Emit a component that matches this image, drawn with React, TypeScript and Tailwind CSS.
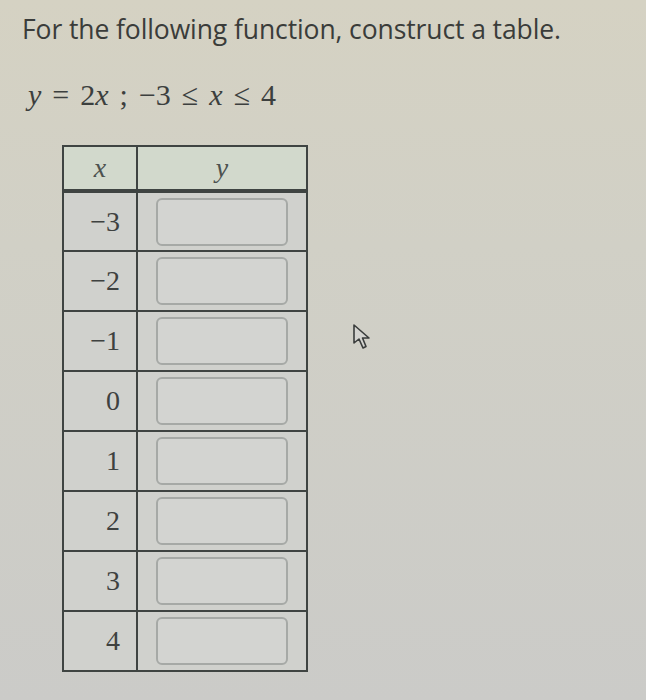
const rows = ["−3", "−2", "−1", "0", "1", "2", "3", "4"];

function Cursor() {
  return (
    <svg width="22" height="28" viewBox="0 0 22 28" className="ml-[44px] mt-[-14px]">
      <path
        d="M2 2 L2 20 L7 16 L11 25 L14 23.5 L10.5 15 L17 15 Z"
        fill="#d4d4d0"
        stroke="#3a3d3c"
        strokeWidth="1.6"
        strokeLinejoin="round"
      />
    </svg>
  );
}

export default function App() {
  return (
    <div className="h-[700px] w-[646px] overflow-hidden bg-[linear-gradient(180deg,#d5d2c3_0%,#d1d0c6_35%,#cbcbc8_100%)] font-['Open_Sans',sans-serif] text-[#3a3c3a]">
      <div className="pl-[22px] pt-[12px] text-[26.5px] leading-[34px] tracking-[-0.1px]">
        For the following function, construct a table.
      </div>
      <div className="mt-[34px] flex items-baseline gap-[11px] pl-[28px] font-['Liberation_Serif',serif] text-[30px] leading-[30px] text-[#3c3f3e]">
        <i>y</i>
        <span>=</span>
        <span>
          2<i>x</i>
        </span>
        <span>;</span>
        <span>−3</span>
        <span>≤</span>
        <i>x</i>
        <span>≤</span>
        <span>4</span>
      </div>

      <div className="mt-[35px] flex items-start">
        <table className="ml-[62px] w-[246px] border-collapse font-['Liberation_Serif',serif] text-[28px] text-[#3e4140]">
          <thead>
            <tr className="h-[40px] bg-[#d2d9cc]">
              <th className="w-[74px] border-2 border-b-[4px] border-[#3f4442] font-normal italic text-[#4d524f]">
                x
              </th>
              <th className="border-2 border-b-[4px] border-[#3f4442] font-normal italic text-[#4d524f]">
                y
              </th>
            </tr>
          </thead>
          <tbody>
            {rows.map((r) => (
              <tr key={r} className="h-[60px] bg-[#d0d1cd]">
                <td className="border-2 border-[#3f4442] pr-[16px] text-right">{r}</td>
                <td className="border-2 border-[#3f4442] px-[18px]">
                  <div className="h-[48px] rounded-[6px] border-2 border-[#a6a9a6] bg-[#d3d4d1]" />
                </td>
              </tr>
            ))}
          </tbody>
        </table>
        <div className="pt-[192px]">
          <Cursor />
        </div>
      </div>
    </div>
  );
}
